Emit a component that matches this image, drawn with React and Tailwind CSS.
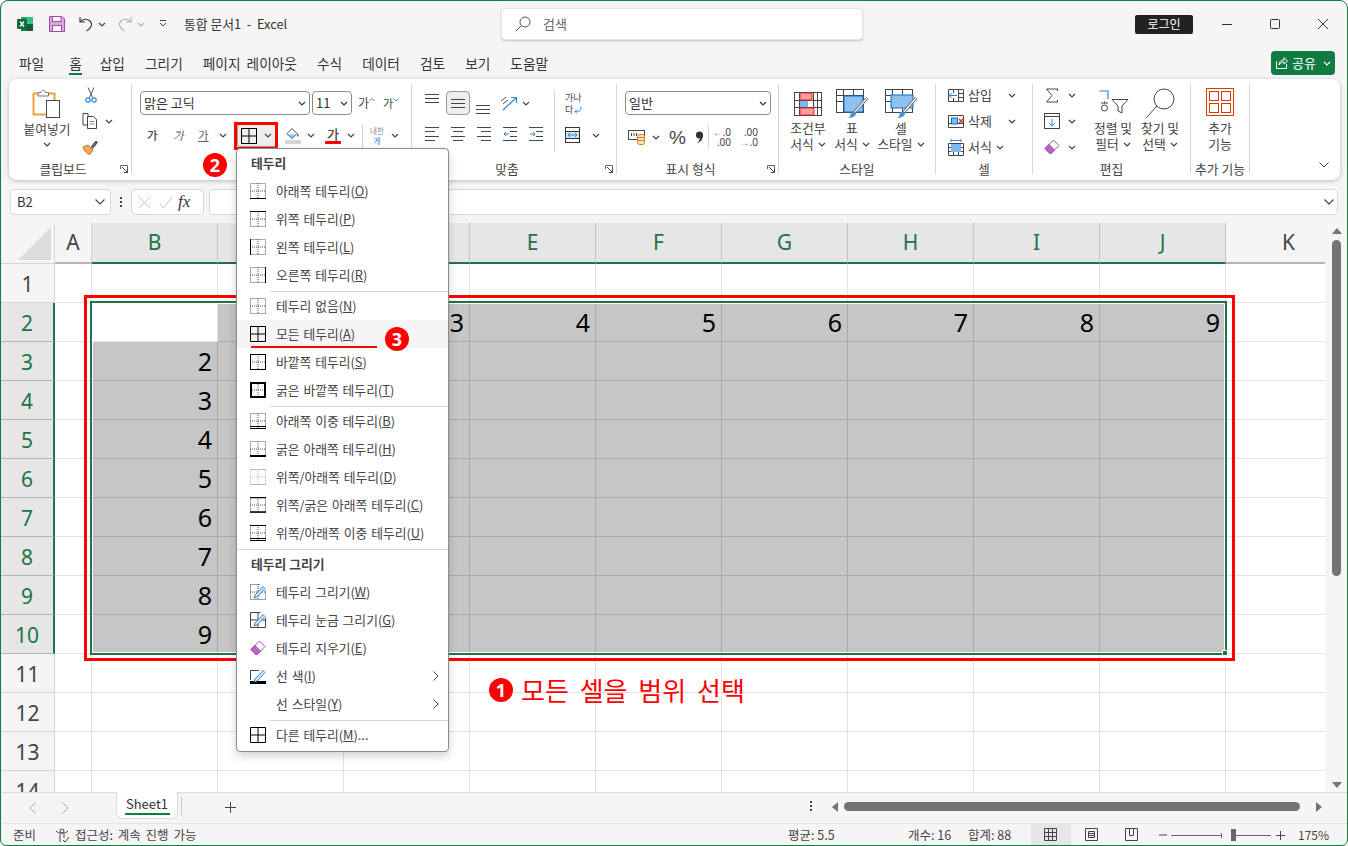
import React from "react";

const Svg = ({ w, h, children, className = "" }) => (
	<svg width={w} height={h} viewBox={`0 0 ${w} ${h}`} fill="none" className={`shrink-0 ${className}`}>
		{children}
	</svg>
);

const Chev = ({ className = "", color = "#444" }) => (
	<Svg w={8} h={5} className={className}>
		<path d="M1 1l3 3 3-3" stroke={color} strokeWidth="1.2" />
	</Svg>
);

const Launcher = () => (
	<Svg w={8} h={8}>
		<path d="M.5 4V.5H7.5V7.5H4" stroke="#666" />
		<path d="M2 2l5 5M4 7.5h3.5V4" stroke="#444" />
	</Svg>
);

const Lines = ({ rows, color = "#444" }) => (
	<Svg w={15} h={15}>
		{rows.map(([a, b, y], i) => (
			<path key={i} d={`M${a} ${y + 0.5}H${b}`} stroke={color} />
		))}
	</Svg>
);

const Group = ({ width, label, launcher, children }) => (
	<div className="flex shrink-0">
		<div className={`flex flex-col ${width}`}>
			<div className="h-[78px] overflow-visible">{children}</div>
			<div className="h-[16px] grid grid-cols-[1fr_auto_1fr] items-center text-[12.8px] leading-[16px] text-[#444] whitespace-nowrap mt-[1px]">
				<span />
				<span className={launcher ? "pr-[14px]" : ""}>{label}</span>
				<span className="justify-self-end pr-[3px] flex">{launcher && <Launcher />}</span>
			</div>
		</div>
		<div className="w-px h-[90px] mt-[2px] bg-[#d6d6d6]" />
	</div>
);

const Select = ({ className, text }) => (
	<div className={`h-[24px] rounded-[4px] border border-[#8a8a8a] bg-white flex items-center justify-between pl-[3px] pr-[3px] text-[13px] text-[#333] ${className}`}>
		<span>{text}</span>
		<Chev color="#333" />
	</div>
);

const LargeBtn = ({ width, icon, line1, line2, chev, iconBox = "h-[28px] mt-[8px]" }) => (
	<div className={`flex flex-col items-center shrink-0 ${width}`}>
		<div className={`flex items-center justify-center ${iconBox}`}>{icon}</div>
		<div className="h-[16px] mt-[2px] leading-[16px] text-[12.8px] text-[#444] whitespace-nowrap">{line1}</div>
		<div className="h-[16px] leading-[16px] text-[12.8px] text-[#444] whitespace-nowrap flex items-center gap-[4px]">
			{line2}
			{chev && <Chev />}
		</div>
	</div>
);

/* ---- ribbon icons ---- */
const ExcelLogo = () => (
	<Svg w={16} h={16}>
		<rect x="4" y="1" width="12" height="14" rx="1" fill="#21a366" />
		<rect x="10" y="1" width="6" height="7" fill="#33c481" />
		<rect x="4" y="8" width="12" height="7" fill="#107c41" />
		<rect x="10" y="8" width="6" height="7" fill="#185c37" />
		<rect x="0" y="3" width="10" height="10" rx="1" fill="#0e6b3a" />
		<path d="M3 5.5l4 5M7 5.5l-4 5" stroke="#fff" strokeWidth="1.3" />
	</Svg>
);
const SaveIcon = () => (
	<Svg w={16} h={16}>
		<path d="M.5.5h12.5l2.5 2.5v12.5H.5z" fill="#d6a8d8" stroke="#a349a4" />
		<rect x="3.5" y=".5" width="8.5" height="5" fill="#fff" stroke="#a349a4" />
		<rect x="3.5" y="9.5" width="9" height="6" fill="#fff" stroke="#a349a4" />
	</Svg>
);
const Undo = ({ color = "#444", flip }) => (
	<Svg w={14} h={16} className={flip ? "-scale-x-100" : ""}>
		<path d="M1 1v5h5M1 6c3-3 7-3.5 10-1 3 3 1.5 7-3.5 10" stroke={color} strokeWidth="1.2" />
	</Svg>
);
const Paste = () => (
	<Svg w={30} h={30}>
		<rect x="1.5" y="5.5" width="21" height="21" fill="#fff" stroke="#eba43c" strokeWidth="2" />
		<path d="M6 8V4.5h3C9.5 1.5 13 1.5 13.5 4.5h3V8z" fill="#fff" stroke="#777" />
		<rect x="14.5" y="12.5" width="13" height="17" fill="#fff" stroke="#444" />
	</Svg>
);
const Scissors = () => (
	<Svg w={12} h={16}>
		<path d="M3 .5l4.5 10M9 .5L4.5 10.5" stroke="#555" />
		<circle cx="3" cy="13" r="2.2" stroke="#2b88d8" strokeWidth="1.2" />
		<circle cx="9" cy="13" r="2.2" stroke="#2b88d8" strokeWidth="1.2" />
	</Svg>
);
const Copy = () => (
	<Svg w={16} h={16}>
		<path d="M6 3V.5H1V12H5" stroke="#444" />
		<path d="M5.5 3.5h6l3 3v9h-9z" fill="#fff" stroke="#444" />
		<path d="M7.5 8.5h5M7.5 11h5" stroke="#888" />
	</Svg>
);
const Painter = () => (
	<Svg w={16} h={16}>
		<path d="M1 8l5-2 5 5-3 4.5C5 15 2 12 1 8z" fill="#f2a65a" stroke="#c8752a" />
		<path d="M9 8l5-6 1.5 1.5-5 6" fill="#666" stroke="#444" />
	</Svg>
);
const GridIcon = ({ size = 16 }) => (
	<Svg w={size} h={size}>
		<rect x=".5" y=".5" width={size - 1} height={size - 1} stroke="#000" />
		<path d={`M${size / 2} 0V${size}M0 ${size / 2}H${size}`} stroke="#000" />
	</Svg>
);
const FillIcon = () => (
	<Svg w={16} h={17}>
		<path d="M2 6.5L7 1.5l5 5-5 5z" stroke="#555" fill="#fff" />
		<path d="M12 6l2 2.5c0 1.5-2 1.5-2 0z" fill="#2b88d8" />
		<path d="M1 7.5h10l-4 4z" fill="#2b88d8" opacity=".5" />
		<rect x="0" y="13" width="16" height="4" fill="#d4d4d4" />
	</Svg>
);
const Orient = () => (
	<Svg w={18} h={17}>
		<path d="M3 15L16 3M11 2.5h5.5V8" stroke="#2b88d8" strokeWidth="1.2" />
		<path d="M1 6l5-4M3 9l5-4" stroke="#555" />
	</Svg>
);
const Merge = () => (
	<Svg w={15} h={16}>
		<rect x=".5" y=".5" width="14" height="15" stroke="#333" />
		<path d="M0 4.5H15M0 11.5H15" stroke="#333" />
		<rect x="1" y="5" width="13" height="6" fill="#cfe4f7" />
		<path d="M3 8h9M5 6L3 8l2 2M10 6l2 2-2 2" stroke="#2b88d8" />
	</Svg>
);
const Accounting = () => (
	<Svg w={18} h={16}>
		<rect x=".5" y="1.5" width="16" height="9" stroke="#444" fill="#fff" />
		<path d="M3.5 4v3M6 4v3M8.5 4v3" stroke="#444" />
		<rect x="9.5" y="5.5" width="7" height="10" rx="2" fill="#fbe3c8" stroke="#e07a14" />
		<path d="M9.5 8.5h7M9.5 11.5h7" stroke="#e07a14" />
	</Svg>
);
const Comma = () => (
	<Svg w={9} h={13}>
		<circle cx="4.5" cy="4" r="3.6" fill="#333" />
		<path d="M8 4c0 4-2 7-6 8.5C4.5 10 5 8 5 6z" fill="#333" />
	</Svg>
);
const Cond = () => (
	<Svg w={29} h={24}>
		<rect x=".5" y=".5" width="27" height="23" stroke="#444" fill="#fff" />
		<path d="M0 8.5H28M0 15.5H28M5.5 0V24M19.5 0V24M23.5 0V24" stroke="#444" />
		<rect x="6" y="1" width="12" height="7" fill="#ff9c9c" stroke="#d92b2b" />
		<rect x="6" y="9" width="8" height="6" fill="#7db9ee" />
		<rect x="6" y="16" width="14" height="7" fill="#ff9c9c" stroke="#d92b2b" />
	</Svg>
);
const BrushTable = ({ variant }) => (
	<Svg w={32} h={30}>
		<rect x=".5" y=".5" width="27" height="23" stroke="#444" fill="#fff" />
		<path d="M0 6.5H28M0 12.5H28M7.5 0V24M17.5 0V24" stroke="#444" />
		{variant === "table" ? (
			<rect x="8" y="7" width="19" height="16" fill="#8fc1ef" stroke="#106ebe" />
		) : (
			<rect x="6" y="6" width="22" height="13" fill="#8fc1ef" stroke="#106ebe" />
		)}
		<path d="M31 9L19 23" stroke="#666" strokeWidth="3" />
		<path d="M31 9L19 23" stroke="#fff" strokeWidth="1.2" />
		<path d="M12 29c3 0 7-1 8-4 0-2-2-3-4-2-2 2-1 5-4 6z" fill="#4a8fd0" />
	</Svg>
);
const CellIcon = ({ kind }) => (
	<Svg w={16} h={17}>
		{kind === "insert" && (
			<>
				<path d="M.5 2.5h15v12H.5zM0 6.5h16M0 10.5h16M5.5 2v13M10.5 2v13" stroke="#444" />
				<rect x="1" y="6" width="9" height="5" fill="#fff" />
				<path d="M9 8.5H1M3.5 6L1 8.5 3.5 11" stroke="#2b88d8" />
			</>
		)}
		{kind === "delete" && (
			<>
				<path d="M.5 2.5h15v12H.5zM0 10.5h16" stroke="#444" />
				<rect x="3.5" y="5" width="6" height="6" fill="#7db9ee" stroke="#106ebe" />
				<path d="M11 6l4 4M15 6l-4 4" stroke="#d92b2b" strokeWidth="1.2" />
			</>
		)}
		{kind === "format" && (
			<>
				<path d="M.5 4.5h15v12H.5zM0 8.5h16M0 12.5h16M5.5 4v13M10.5 4v13" stroke="#444" />
				<rect x="3" y="5" width="10" height="8" fill="#7db9ee" />
				<path d="M3 1.5h10M3 0v3M13 0v3" stroke="#2b88d8" />
			</>
		)}
	</Svg>
);
const Sigma = () => (
	<Svg w={14} h={15}>
		<path d="M12.5 3V1H1.5L7 7.5 1.5 14h11v-2" stroke="#444" />
	</Svg>
);
const FillDown = () => (
	<Svg w={16} h={16}>
		<rect x=".5" y=".5" width="15" height="15" stroke="#444" fill="#fff" />
		<path d="M0 3.5h16" stroke="#444" />
		<path d="M8 6v7M5 10l3 3 3-3" stroke="#2b88d8" />
	</Svg>
);
const Eraser = ({ size = 16 }) => (
	<svg width={size} height={size} viewBox="0 0 16 16" fill="none" className="shrink-0">
		<path d="M1 9.5L9.5 1 15 6.5 6.5 15z" fill="#fff" stroke="#a349a4" />
		<path d="M1 9.5L5 5.5l5.5 5.5-4 4z" fill="#b768c4" stroke="#a349a4" />
	</svg>
);
const SortFilter = () => (
	<Svg w={31} h={24}>
		<path d="M1.5 1H10V9" stroke="#2b88d8" strokeWidth="1.2" />
		<path d="M3 13h7M6.5 11.5v2" stroke="#444" />
		<circle cx="6.5" cy="18" r="3" stroke="#444" />
		<path d="M14 9.5h16L24 16v7l-4-2v-5z" fill="#fff" stroke="#444" />
	</Svg>
);
const Find = () => (
	<Svg w={30} h={31}>
		<circle cx="19" cy="11" r="10" stroke="#444" fill="#fff" />
		<path d="M12 18L1 30" stroke="#444" />
	</Svg>
);
const Addins = () => (
	<Svg w={28} h={28}>
		<rect x=".5" y=".5" width="27" height="27" stroke="#d83b01" />
		<rect x="3.5" y="3.5" width="9" height="9" stroke="#d83b01" />
		<rect x="15.5" y="3.5" width="9" height="9" stroke="#d83b01" />
		<rect x="3.5" y="15.5" width="9" height="9" stroke="#d83b01" />
		<rect x="15.5" y="15.5" width="9" height="9" stroke="#d83b01" />
	</Svg>
);

/* ---- border menu icons ---- */
const BorderIcon = ({ v }) => {
	const edges = {
		bottom: <path d="M0 15.5h16" stroke="#000" />,
		top: <path d="M0 .5h16" stroke="#000" />,
		left: <path d="M.5 0v16" stroke="#000" />,
		right: <path d="M15.5 0v16" stroke="#000" />,
		none: null,
		all: <path d="M.5.5h15v15H.5zM8 0v16M0 8h16" stroke="#000" />,
		outer: <rect x=".5" y=".5" width="15" height="15" stroke="#000" />,
		thick: <rect x="1" y="1" width="14" height="14" stroke="#000" strokeWidth="2" />,
		double: <path d="M0 13.5h16M0 15.5h16" stroke="#000" />,
		thickBottom: <path d="M0 15h16" stroke="#000" strokeWidth="2" />,
		topBottom: <path d="M0 .5h16M0 15.5h16" stroke="#bbb" />,
		topThick: <path d="M0 .5h16M0 15h16" stroke="#000" strokeWidth="1.5" />,
		topDouble: <path d="M0 .5h16M0 13.5h16M0 15.5h16" stroke="#000" />,
	};
	const dot = v === "topBottom" ? "#bbb" : "#555";
	return (
		<Svg w={16} h={16}>
			{v !== "all" && (
				<path d="M.5.5h15v15H.5zM8 0v16M0 8h16" stroke={dot} strokeDasharray="1 1" />
			)}
			{edges[v]}
		</Svg>
	);
};
const DrawIcon = ({ kind }) => (
	<Svg w={16} h={16}>
		{kind === "color" ? (
			<>
				<path d="M.5 12V2.5H9" stroke="#444" />
				<rect x="0" y="13" width="16" height="3" fill="#000" />
			</>
		) : (
			<path d="M.5.5h10M.5.5v15h15V6M8 0v16M0 8h16" stroke="#444" strokeDasharray={kind === "grid" ? "" : "1 1"} />
		)}
		<path d="M5 11L13 2.5l2 2L7 13l-3 1z" fill="#cfe4f7" stroke="#2b88d8" />
	</Svg>
);

const U = ({ children }) => <span className="underline">{children}</span>;

const MenuRow = ({ icon, text, k, tail, arrow, active }) => (
	<div className={`h-[28px] flex items-center pl-[13px] pr-[9px] text-[12.8px] [word-spacing:1px] text-[#444] whitespace-nowrap ${active ? "bg-[#f5f5f5]" : ""}`}>
		<div className="w-[16px] h-[16px] flex items-center justify-center">{icon}</div>
		<span className="ml-[10px]">
			{text}({<U>{k}</U>}){tail}
		</span>
		{arrow && (
			<Svg w={6} h={10} className="ml-auto">
				<path d="M.5.5L5 5 .5 9.5" stroke="#444" />
			</Svg>
		)}
	</div>
);

const MenuSep = ({ full }) => <div className={`h-px bg-[#d4d4d4] mt-[2px] ${full ? "ml-[1px]" : "ml-[33px]"}`} />;

const MenuHead = ({ children }) => (
	<div className="h-[28px] flex items-center pl-[14px] text-[12.8px] font-bold text-[#444]">{children}</div>
);

const Badge = ({ n, className }) => (
	<div className={`absolute w-[24px] h-[24px] rounded-full bg-[#f00] flex items-center justify-center text-white text-[18px] font-bold font-['Noto_Sans',sans-serif] leading-none ${className}`}>
		{n}
	</div>
);

const columns = ["A", "B", "C", "D", "E", "F", "G", "H", "I", "J", "K"];
const rowNums = [1, 2, 3, 4, 5, 6, 7, 8, 9, 10, 11, 12, 13, 14];
const topValues = { D: 3, E: 4, F: 5, G: 6, H: 7, I: 8, J: 9 };
// C, D 열 머리글은 메뉴에 가려져 있음
const hiddenHeaders = ["C", "D"];

const cellValue = (col, row) => {
	if (row === 2) return topValues[col] || "";
	if (col === "B" && row >= 3 && row <= 10) return row - 1;
	return "";
};

const isSelected = (col, row) => col !== "A" && col !== "K" && row >= 2 && row <= 10 && !(col === "B" && row === 2);

const Sheet = () => (
	<div className="h-[569px] flex overflow-hidden">
		<div className="w-[1324px] overflow-hidden grid grid-cols-[54px_37px_repeat(10,126px)] grid-rows-[41px] auto-rows-[39px] content-start font-['Noto_Sans',sans-serif]">
			<div className="bg-[#f5f5f5] border-r border-b border-[#d4d4d4] flex items-end justify-end pr-[3px] pb-[3px]">
				<div className="w-0 h-0 border-l-[33px] border-l-transparent border-b-[33px] border-b-[#dcdcdc]" />
			</div>
			{columns.map((c) => {
				const sel = c !== "A" && c !== "K";
				return (
					<div
						key={c}
						className={`flex items-center justify-center text-[21px] border-r ${
							sel
								? "bg-[#e6e6e6] text-[#217346] border-[#c4c4c4] border-b-2 border-b-[#217346]"
								: "bg-[#f5f5f5] text-[#444] border-[#d4d4d4] border-b-2 border-b-[#b5b5b5]"
						}`}
					>
						{hiddenHeaders.includes(c) ? "" : c}
					</div>
				);
			})}
			{rowNums.map((r) => {
				const rowSel = r >= 2 && r <= 10;
				return (
					<React.Fragment key={r}>
						<div
							className={`flex items-center justify-center pt-[3px] text-[21px] border-b ${
								rowSel
									? "bg-[#e6e6e6] text-[#217346] border-b-[#b5b5b5] border-r-2 border-r-[#217346]"
									: "bg-[#f5f5f5] text-[#444] border-b-[#d4d4d4] border-r border-r-[#d4d4d4]"
							}`}
						>
							{r}
						</div>
						{columns.map((c) => (
							<div
								key={c}
								className={`flex items-center justify-end pr-[5px] pt-[1px] text-[25px] text-black border-r border-b ${
									isSelected(c, r) ? "bg-[#c6c6c6] border-[#a9a9a9]" : "bg-white border-[#e1e1e1]"
								}`}
							>
								{cellValue(c, r)}
							</div>
						))}
					</React.Fragment>
				);
			})}
		</div>
		<div className="w-[22px] flex flex-col items-center pl-[1px]">
			<div className="mt-[5px] w-0 h-0 border-x-[5px] border-x-transparent border-b-[6px] border-b-[#737373]" />
			<div className="mt-[6px] w-[9px] h-[336px] rounded-full bg-[#737373]" />
			<div className="mt-[206px] w-0 h-0 border-x-[5px] border-x-transparent border-t-[6px] border-t-[#737373]" />
		</div>
	</div>
);

export default function App() {
	return (
		<div className="relative w-[1348px] h-[846px] overflow-hidden bg-white font-['Noto_Sans_CJK_KR','Noto_Sans',sans-serif]">
			<div className="w-full h-full bg-[#f5f5f5] border border-[#107c41] rounded-t-[8px] rounded-b-[6px] overflow-hidden flex flex-col">
				{/* 제목 표시줄 */}
				<div className="h-[46px] flex items-center pl-[16px] shrink-0">
					<ExcelLogo />
					<div className="ml-[16px]"><SaveIcon /></div>
					<div className="ml-[14px]"><Undo /></div>
					<Chev className="ml-[5px]" />
					<div className="ml-[12px]"><Undo color="#b4b4b4" flip /></div>
					<Chev className="ml-[5px]" color="#b4b4b4" />
					<Svg w={8} h={8} className="ml-[14px]">
						<path d="M1 .5h6M1 3l3 3 3-3" stroke="#444" />
					</Svg>
					<div className="ml-[17px] w-[317px] text-[12.8px] text-[#333] whitespace-pre">통합 문서1  -  Excel</div>
					<div className="w-[362px] h-[32px] bg-white rounded-[4px] border border-[#e4e4e4] shadow-[0_1px_2px_rgba(0,0,0,0.2)] flex items-center pl-[13px]">
						<Svg w={16} h={16}>
							<circle cx="10" cy="6" r="5" stroke="#555" />
							<path d="M6.5 9.5L1 15" stroke="#555" />
						</Svg>
						<span className="ml-[12px] text-[13px] text-[#666]">검색</span>
					</div>
					<div className="ml-[272px] w-[58px] h-[19px] rounded-[2px] bg-[#222] text-white text-[12px] flex items-center justify-center">로그인</div>
					<Svg w={10} h={10} className="ml-[29px]"><path d="M0 5.5h10" stroke="#333" /></Svg>
					<Svg w={10} h={10} className="ml-[38px]"><rect x=".5" y=".5" width="9" height="9" rx="1" stroke="#333" /></Svg>
					<Svg w={10} h={10} className="ml-[38px]"><path d="M0 0l10 10M10 0L0 10" stroke="#333" /></Svg>
				</div>

				{/* 탭 */}
				<div className="h-[32px] flex items-center pl-[18px] pr-[12px] gap-[20px] text-[13.7px] text-[#333] whitespace-nowrap shrink-0">
					<span className="h-[24px] leading-[24px]">파일</span>
					<span className="ml-[5px] h-[24px] leading-[24px] shadow-[inset_0_-2px_0_#107c41]">홈</span>
					<span className="-ml-[2px] h-[24px] leading-[24px]">삽입</span>
					<span className="h-[24px] leading-[24px]">그리기</span>
					<span className="h-[24px] leading-[24px] [word-spacing:3px]">페이지 레이아웃</span>
					<span className="h-[24px] leading-[24px]">수식</span>
					<span className="h-[24px] leading-[24px]">데이터</span>
					<span className="h-[24px] leading-[24px]">검토</span>
					<span className="h-[24px] leading-[24px]">보기</span>
					<span className="h-[24px] leading-[24px]">도움말</span>
					<div className="ml-auto w-[64px] h-[24px] rounded-[4px] bg-[#107c41] text-white text-[13px] flex items-center pl-[5px] gap-[4px]">
						<Svg w={12} h={12}>
							<path d="M.5 4.5v7h10V7M3 8c0-3 2-5 5-5V.5L11.5 4 8 7V5C6 5 4 6 3 8z" stroke="#fff" />
						</Svg>
						<span>공유</span>
						<Chev color="#fff" className="ml-[3px]" />
					</div>
				</div>

				{/* 리본 */}
				<div className="mx-[8px] w-[1331px] h-[101px] shrink-0 rounded-[8px] bg-white shadow-[0_1px_4px_rgba(0,0,0,0.25)] flex pt-[3px]">
					<Group width="w-[122px]" label="클립보드" launcher>
						<div className="flex">
							<div className="w-[76px] flex flex-col items-center">
								<div className="mt-[6px]"><Paste /></div>
								<div className="mt-[3px] text-[12.8px] leading-[16px] text-[#444]">붙여넣기</div>
								<Chev className="mt-[5px]" />
							</div>
							<div className="flex flex-col">
								<div className="h-[26px] flex items-center"><Scissors /></div>
								<div className="h-[26px] flex items-center -ml-[3px]"><Copy /><Chev className="ml-[7px]" /></div>
								<div className="h-[26px] flex items-center -ml-[3px]"><Painter /></div>
							</div>
						</div>
					</Group>

					<Group width="w-[279px]" label="">
						<div className="flex flex-col pt-[9px]">
							<div className="h-[24px] flex items-center pl-[8px]">
								<Select className="w-[170px]" text="맑은 고딕" />
								<Select className="w-[40px] ml-[2px]" text="11" />
								<span className="ml-[6px] text-[12px] text-[#444]">가</span>
								<Svg w={6} h={8} className="mb-[4px]"><path d="M.5 4L3 1.5 5.5 4" stroke="#2b88d8" /></Svg>
								<span className="ml-[8px] text-[11px] text-[#444]">가</span>
								<Svg w={6} h={8} className="mb-[4px]"><path d="M.5 1.5L3 4 5.5 1.5" stroke="#2b88d8" /></Svg>
							</div>
							<div className="h-[23px] mt-[9px] flex items-center text-[11.5px] text-[#444]">
								<span className="ml-[15px] w-[11px] font-medium">가</span>
								<span className="ml-[15px] w-[11px] italic text-[#666]">가</span>
								<span className="ml-[14px] w-[12px] underline text-[#666]">가</span>
								<Chev className="ml-[9px]" />
								<div className="ml-[10px] w-[40px] h-[23px] rounded-[3px] bg-[#eeeeee] border border-[#9a9a9a] flex items-center pl-[3px]">
									<GridIcon />
									<Chev className="ml-[7px]" />
								</div>
								<div className="ml-[8px]"><FillIcon /></div>
								<Chev className="ml-[6px]" />
								<div className="ml-[10px] w-[16px] flex flex-col items-center">
									<span className="font-medium text-[13px] leading-[14px]">가</span>
									<div className="w-[16px] h-[3px] bg-[#f00]" />
								</div>
								<Chev className="ml-[6px]" />
								<div className="ml-[7px] w-px h-[24px] bg-[#d6d6d6]" />
								<div className="ml-[6px] w-[16px] flex flex-col items-center text-[7.5px] leading-[10px] text-[#888]">
									<span>내천</span>
									<span className="text-[#2b88d8]">게</span>
								</div>
								<Chev className="ml-[6px]" />
							</div>
						</div>
					</Group>

					<Group width="w-[204px]" label="맞춤" launcher>
						<div className="flex">
							<div className="w-[142px] pl-[13px] flex flex-col">
								<div className="h-[24px] mt-[9px] flex items-center">
									<div className="h-[24px] flex items-start pt-[3px]"><Lines rows={[[0, 14, 0], [0, 14, 4], [0, 14, 8]]} /></div>
									<div className="ml-[6px] w-[24px] h-[24px] rounded-[4px] bg-[#eeeeee] border border-[#9a9a9a] flex items-center justify-center"><Lines rows={[[0, 14, 3], [0, 14, 7], [0, 14, 11]]} /></div>
									<div className="ml-[6px] h-[24px] flex items-end"><Lines rows={[[0, 14, 5], [0, 14, 9], [0, 14, 13]]} /></div>
									<div className="ml-[9px]"><Orient /></div>
									<Chev className="ml-[4px]" />
								</div>
								<div className="h-[15px] mt-[12px] flex items-center gap-[11px]">
									<Lines rows={[[0, 14, 0], [0, 10, 4], [0, 14, 9], [0, 10, 13]]} />
									<Lines rows={[[0, 14, 0], [2, 12, 4], [0, 14, 9], [2, 12, 13]]} />
									<Lines rows={[[0, 14, 0], [4, 14, 4], [0, 14, 9], [4, 14, 13]]} />
									<Svg w={15} h={15}>
										<path d="M0 .5h14M7 4.5h7M7 9.5h7M0 13.5h14" stroke="#444" />
										<path d="M6 7H1M3 5L1 7l2 2" stroke="#2b88d8" />
									</Svg>
									<Svg w={15} h={15}>
										<path d="M0 .5h14M7 4.5h7M7 9.5h7M0 13.5h14" stroke="#444" />
										<path d="M1 7h5M4 5l2 2-2 2" stroke="#2b88d8" />
									</Svg>
								</div>
							</div>
							<div className="w-px h-[62px] mt-[8px] bg-[#d6d6d6]" />
							<div className="pl-[10px] flex flex-col">
								<div className="h-[24px] mt-[10px] flex flex-col text-[9px] leading-[12px] text-[#444]">
									<span>가나</span>
									<span className="flex items-center">다
										<Svg w={9} h={8}><path d="M8 .5v2C8 5 6 5.5 2 5.5M4 3.5L2 5.5l2 2" stroke="#2b88d8" /></Svg>
									</span>
								</div>
								<div className="mt-[11px] flex items-center">
									<Merge />
									<Chev className="ml-[12px]" />
								</div>
							</div>
						</div>
					</Group>

					<Group width="w-[161px]" label="표시 형식" launcher>
						<div className="flex flex-col pt-[9px] pl-[8px]">
							<Select className="w-[146px]" text="일반" />
							<div className="mt-[10px] h-[24px] flex items-center text-[#444]">
								<div className="ml-[3px]"><Accounting /></div>
								<Chev className="ml-[6px]" />
								<span className="ml-[9px] w-[17px] text-[19px] leading-none font-['Liberation_Sans',sans-serif]">%</span>
								<div className="ml-[9px] w-[10px]"><Comma /></div>
								<div className="ml-[3px] w-px h-[24px] bg-[#d6d6d6]" />
								<div className="ml-[5px] w-[17px] flex flex-col text-[10px] leading-[10px] font-['Noto_Sans',sans-serif]">
									<span className="flex items-center justify-end"><span className="text-[#2b88d8]">←</span>.0</span>
									<span className="text-right">.00</span>
								</div>
								<div className="ml-[10px] w-[17px] flex flex-col text-[10px] leading-[10px] font-['Noto_Sans',sans-serif]">
									<span className="text-right">.00</span>
									<span className="flex items-center justify-end"><span className="text-[#2b88d8]">→</span>.0</span>
								</div>
							</div>
						</div>
					</Group>

					<Group width="w-[156px]" label="스타일">
						<div className="flex pl-[3px]">
							<LargeBtn width="w-[52px]" icon={<Cond />} line1="조건부" line2="서식" chev />
							<LargeBtn width="w-[36px]" icon={<BrushTable variant="table" />} line1="표" line2="서식" chev />
							<LargeBtn width="w-[62px]" icon={<BrushTable variant="cell" />} line1="셀" line2="스타일" chev />
						</div>
					</Group>

					<Group width="w-[96px]" label="셀">
						<div className="flex flex-col text-[13px] text-[#444]">
							<div className="h-[26px] flex items-center pl-[12px]"><CellIcon kind="insert" /><span className="ml-[4px] w-[40px]">삽입</span><Chev /></div>
							<div className="h-[26px] flex items-center pl-[12px]"><CellIcon kind="delete" /><span className="ml-[4px] w-[40px]">삭제</span><Chev /></div>
							<div className="h-[26px] flex items-center pl-[12px]"><CellIcon kind="format" /><span className="ml-[4px] w-[28px]">서식</span><Chev /></div>
						</div>
					</Group>

					<Group width="w-[157px]" label="편집">
						<div className="flex">
							<div className="w-[56px] flex flex-col pl-[12px]">
								<div className="h-[26px] flex items-center"><Sigma /><Chev className="ml-[9px]" /></div>
								<div className="h-[26px] flex items-center -ml-[1px]"><FillDown /><Chev className="ml-[8px]" /></div>
								<div className="h-[26px] flex items-center -ml-[1px]"><Eraser /><Chev className="ml-[8px]" /></div>
							</div>
							<LargeBtn width="w-[48px]" icon={<SortFilter />} line1="정렬 및" line2="필터" chev iconBox="h-[24px] mt-[8px] mb-[4px]" />
							<LargeBtn width="w-[46px]" icon={<Find />} line1="찾기 및" line2="선택" chev iconBox="h-[31px] mt-[6px] -mb-[1px]" />
						</div>
					</Group>

					<Group width="w-[58px]" label="추가 기능">
						<LargeBtn width="w-[58px]" icon={<Addins />} line1="추가" line2="기능" iconBox="h-[28px] mt-[6px] mb-[2px]" />
					</Group>

					<div className="ml-auto mr-[11px] mt-[80px]">
						<Svg w={10} h={6}><path d="M.5.5L5 5 9.5.5" stroke="#444" /></Svg>
					</div>
				</div>

				{/* 수식 입력줄 */}
				<div className="mt-[9px] h-[26px] shrink-0 flex items-center pl-[9px]">
					<div className="w-[101px] h-[26px] bg-white rounded-[4px] border border-[#d8d8d8] flex items-center justify-between pl-[6px] pr-[5px] text-[13px] text-[#333]">
						<span>B2</span>
						<Svg w={10} h={6}><path d="M.5.5L5 5 9.5.5" stroke="#444" strokeWidth="1.2" /></Svg>
					</div>
					<div className="ml-[9px] w-[2px] flex flex-col gap-[2px]">
						<div className="h-[2px] bg-[#444]" />
						<div className="h-[2px] bg-[#444]" />
						<div className="h-[2px] bg-[#444]" />
					</div>
					<div className="ml-[9px] w-[73px] h-[26px] bg-white rounded-[4px] border border-[#d8d8d8] flex items-center pl-[6px]">
						<Svg w={13} h={13}><path d="M.5.5l12 12M12.5.5l-12 12" stroke="#c4c4c4" /></Svg>
						<Svg w={14} h={13} className="ml-[8px]"><path d="M.5 7l4 5L13.5.5" stroke="#c4c4c4" /></Svg>
						<span className="ml-[5px] font-['Liberation_Serif',serif] italic text-[17px] text-[#333]">fx</span>
					</div>
					<div className="ml-[5px] w-[1129px] h-[26px] bg-white rounded-[4px] border border-[#d8d8d8] flex items-center justify-end pr-[3px]">
						<Svg w={10} h={6}><path d="M.5.5L5 5 9.5.5" stroke="#444" strokeWidth="1.2" /></Svg>
					</div>
				</div>

				{/* 시트 */}
				<div className="mt-[8px] shrink-0"><Sheet /></div>

				{/* 시트 탭 */}
				<div className="h-[31px] shrink-0 flex items-start border-t border-[#dcdcdc]">
					<Svg w={7} h={12} className="ml-[28px] mt-[9px]"><path d="M6.5.5L1 6l5.5 5.5" stroke="#aaa" /></Svg>
					<Svg w={7} h={12} className="ml-[26px] mt-[9px]"><path d="M.5.5L6 6 .5 11.5" stroke="#aaa" /></Svg>
					<div className="ml-[47px] -mt-px w-[62px] h-[27px] bg-white rounded-b-[6px] border-x border-b border-[#dcdcdc] flex flex-col items-center pt-[3px] text-[13px] leading-[17px] text-[#333]">
						<span>Sheet1</span>
						<div className="mt-[1px] w-[45px] h-[2px] bg-[#107c41]" />
					</div>
					<div className="ml-[3px] mt-[4px] w-px h-[18px] bg-[#c8c8c8]" />
					<Svg w={11} h={11} className="ml-[43px] mt-[9px]"><path d="M5.5 0v11M0 5.5h11" stroke="#444" /></Svg>
					<div className="ml-[574px] mt-[8px] w-[2px] flex flex-col gap-[2px]">
						<div className="h-[2px] bg-[#444]" />
						<div className="h-[2px] bg-[#444]" />
						<div className="h-[2px] bg-[#444]" />
					</div>
					<div className="ml-[20px] mt-[9px] w-0 h-0 border-y-[5px] border-y-transparent border-r-[6px] border-r-[#737373]" />
					<div className="ml-[6px] mt-[9px] w-[456px] h-[9px] rounded-full bg-[#737373]" />
					<div className="ml-[16px] mt-[9px] w-0 h-0 border-y-[5px] border-y-transparent border-l-[6px] border-l-[#737373]" />
				</div>

				{/* 상태 표시줄 */}
				<div className="flex-1 flex items-center border-t border-[#e4e4e4] text-[12.5px] text-[#444] whitespace-nowrap pl-[12px]">
					<span className="w-[43px]">준비</span>
					<Svg w={13} h={15}>
						<circle cx="6" cy="3" r="2" stroke="#444" />
						<path d="M0 3c3 3 9 3 12 0M4 6v8M8 6v4M7 12l2 2 4-5" stroke="#444" />
					</Svg>
					<span className="ml-[6px] w-[713px] [word-spacing:2px]">접근성: 계속 진행 가능</span>
					<span className="w-[120px]">평균: 5.5</span>
					<span className="w-[60px]">개수: 16</span>
					<span className="w-[63px]">합계: 88</span>
					<div className="w-[40px] h-[22px] bg-[#e6e6e6] flex items-center justify-center">
						<Svg w={14} h={14}><path d="M.5.5h12v12H.5zM.5 4.5h12M.5 8.5h12M4.5.5v12M8.5.5v12" stroke="#444" /></Svg>
					</div>
					<div className="w-[41px] flex justify-center">
						<Svg w={14} h={14}><path d="M.5.5h12v12H.5z" stroke="#444" /><path d="M3.5 3.5h6v6h-6zM3.5 5.5h6M3.5 7.5h6" stroke="#444" /></Svg>
					</div>
					<div className="w-[40px] flex justify-center">
						<Svg w={14} h={14}><path d="M.5.5h12v12H.5zM4.5.5v7h4v-7" stroke="#444" /></Svg>
					</div>
					<Svg w={8} h={2} className="ml-[7px]"><path d="M0 1h8" stroke="#444" /></Svg>
					<div className="ml-[4px] w-[100px] h-[12px] flex items-center">
						<div className="w-[50px] h-px bg-[#666]" />
						<div className="w-px h-[5px] bg-[#666]" />
						<div className="ml-[9px] w-[5px] h-[12px] bg-[#666]" />
						<div className="flex-1 h-px bg-[#666]" />
					</div>
					<Svg w={9} h={9} className="ml-[5px]"><path d="M4.5 0v9M0 4.5h9" stroke="#444" /></Svg>
					<span className="ml-[13px] text-[12px]">175%</span>
				</div>
			</div>

			{/* 선택 영역 */}
			<div className="absolute left-[90px] top-[301px] w-[1137px] h-[354px] border-2 border-[#217346]">
				<div className="w-full h-full border border-white" />
				<div className="absolute -right-[3px] -bottom-[3px] w-[6px] h-[6px] bg-[#217346] border border-white" />
			</div>

			{/* 강조 표시 */}
			<div className="absolute left-[84px] top-[295px] w-[1151px] h-[366px] border-[3px] border-[#f00]" />
			<div className="absolute left-[234px] top-[122px] w-[44px] h-[28px] border-[3px] border-[#f00]" />

			{/* 테두리 메뉴 */}
			<div className="absolute left-[236px] top-[148px] w-[213px] h-[604px] bg-white rounded-[4px] border border-[#8a8a8a] shadow-[0_4px_10px_rgba(0,0,0,0.18)] overflow-hidden">
				<MenuHead>테두리</MenuHead>
				<MenuRow icon={<BorderIcon v="bottom" />} text="아래쪽 테두리" k="O" />
				<MenuRow icon={<BorderIcon v="top" />} text="위쪽 테두리" k="P" />
				<MenuRow icon={<BorderIcon v="left" />} text="왼쪽 테두리" k="L" />
				<MenuRow icon={<BorderIcon v="right" />} text="오른쪽 테두리" k="R" />
				<MenuSep />
				<MenuRow icon={<BorderIcon v="none" />} text="테두리 없음" k="N" />
				<MenuRow icon={<BorderIcon v="all" />} text="모든 테두리" k="A" active />
				<MenuRow icon={<BorderIcon v="outer" />} text="바깥쪽 테두리" k="S" />
				<MenuRow icon={<BorderIcon v="thick" />} text="굵은 바깥쪽 테두리" k="T" />
				<MenuSep />
				<MenuRow icon={<BorderIcon v="double" />} text="아래쪽 이중 테두리" k="B" />
				<MenuRow icon={<BorderIcon v="thickBottom" />} text="굵은 아래쪽 테두리" k="H" />
				<MenuRow icon={<BorderIcon v="topBottom" />} text="위쪽/아래쪽 테두리" k="D" />
				<MenuRow icon={<BorderIcon v="topThick" />} text="위쪽/굵은 아래쪽 테두리" k="C" />
				<MenuRow icon={<BorderIcon v="topDouble" />} text="위쪽/아래쪽 이중 테두리" k="U" />
				<MenuSep full />
				<MenuHead>테두리 그리기</MenuHead>
				<MenuRow icon={<DrawIcon kind="draw" />} text="테두리 그리기" k="W" />
				<MenuRow icon={<DrawIcon kind="grid" />} text="테두리 눈금 그리기" k="G" />
				<MenuRow icon={<Eraser />} text="테두리 지우기" k="E" />
				<MenuRow icon={<DrawIcon kind="color" />} text="선 색" k="I" arrow />
				<MenuRow text="선 스타일" k="Y" arrow />
				<MenuSep />
				<MenuRow icon={<BorderIcon v="all" />} text="다른 테두리" k="M" tail="..." />
			</div>

			<div className="absolute left-[251px] top-[346px] w-[126px] h-[2px] bg-[#f00]" />
			<Badge n="2" className="left-[203px] top-[153px]" />
			<Badge n="3" className="left-[385px] top-[327px]" />
			<Badge n="1" className="left-[489px] top-[678px]" />
			<div className="absolute left-[521px] top-[672px] text-[26px] leading-[36px] [word-spacing:5px] text-[#f00] whitespace-nowrap">모든 셀을 범위 선택</div>
		</div>
	);
}
